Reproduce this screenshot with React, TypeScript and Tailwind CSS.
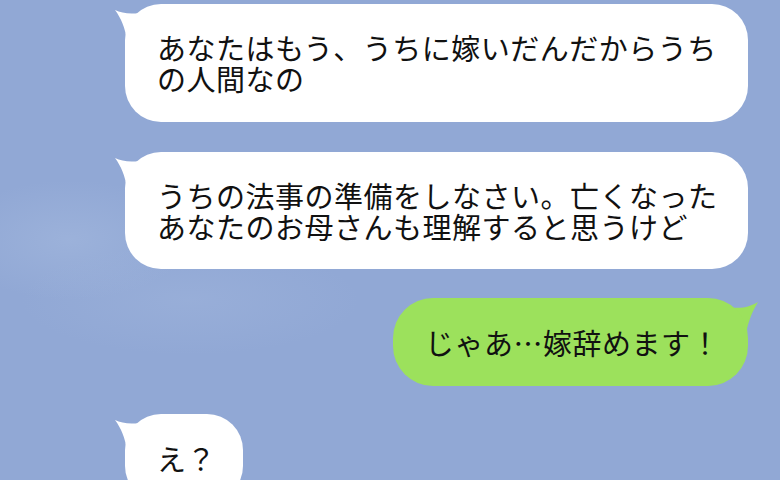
import React from "react";

const font = {
  fontFamily: '"Noto Sans CJK JP", "Noto Sans", sans-serif',
};

const textCls =
  "whitespace-nowrap text-[29px] leading-[31px] tracking-[0.5px] font-normal text-[#111111]";

// Small horn-shaped tail on the top-left of an incoming bubble
function LeftTail({ fill }: { fill: string }) {
  return (
    <svg
      className="absolute left-[-12px] top-0"
      width="50"
      height="45"
      viewBox="0 0 50 45"
    >
      <path
        d="M14 36 C12 24 8 14 2 6 C10 10 22 11 34 7 L44 30 Z"
        fill={fill}
      />
    </svg>
  );
}

// Mirrored tail on the top-right of an outgoing bubble
function RightTail({ fill }: { fill: string }) {
  return (
    <svg
      className="absolute right-[-12px] top-0"
      width="50"
      height="45"
      viewBox="0 0 50 45"
    >
      <path
        d="M36 36 C38 24 42 14 48 4 C40 9 28 12 16 8 L6 30 Z"
        fill={fill}
      />
    </svg>
  );
}

function Incoming({
  lines,
  className,
}: {
  lines: string[];
  className: string;
}) {
  return (
    <div className={`relative ml-[125px] ${className}`}>
      <LeftTail fill="#ffffff" />
      <div className="relative flex h-full w-full flex-col justify-center rounded-[36px] bg-white pl-[32px]">
        {lines.map((l) => (
          <div key={l} className={textCls}>
            {l}
          </div>
        ))}
      </div>
    </div>
  );
}

export default function App() {
  return (
    <div
      className="relative h-[480px] w-[780px] overflow-hidden bg-[#91a8d5] bg-[radial-gradient(ellipse_120px_60px_at_70px_240px,rgba(172,192,226,0.4),transparent),radial-gradient(ellipse_170px_55px_at_190px_300px,rgba(168,188,224,0.3),transparent)]"
      style={font}
    >
      <div className="flex flex-col pt-[4px]">
        <Incoming
          className="h-[118px] w-[623px]"
          lines={["あなたはもう、うちに嫁いだんだからうち", "の人間なの"]}
        />
        <Incoming
          className="mt-[30px] h-[117px] w-[623px]"
          lines={[
            "うちの法事の準備をしなさい。亡くなった",
            "あなたのお母さんも理解すると思うけど",
          ]}
        />
        <div className="relative mr-[32px] mt-[29px] self-end">
          <RightTail fill="#9ce15c" />
          <div className="relative flex h-[88px] items-center rounded-[40px] bg-[#9ce15c] pl-[32px] pr-[28px]">
            <span className={textCls}>じゃあ…嫁辞めます！</span>
          </div>
        </div>
        <Incoming className="mt-[28px] h-[88px] w-[118px]" lines={["え？"]} />
      </div>
    </div>
  );
}
